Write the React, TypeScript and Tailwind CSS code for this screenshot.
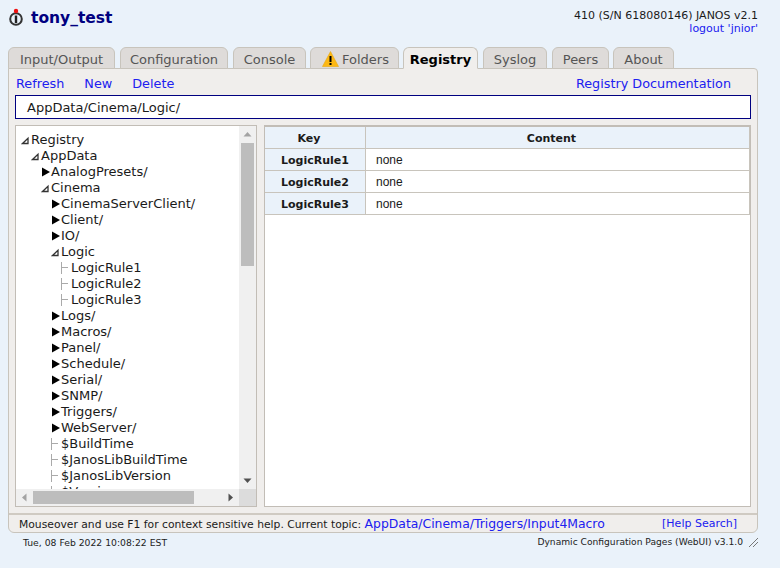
const tabs = [
  { name: 'Input/Output', w: 'w-[107px] mr-[5px]' },
  { name: 'Configuration', w: 'w-[108px] mr-[5px]' },
  { name: 'Console', w: 'w-[73px] mr-[4px]' },
  { name: 'Folders', w: 'w-[89px] mr-[4px]', warn: true },
  { name: 'Registry', w: 'w-[75px] mr-[5px]', active: true },
  { name: 'Syslog', w: 'w-[64px] mr-[5px]' },
  { name: 'Peers', w: 'w-[57px] mr-[4px]' },
  { name: 'About', w: 'w-[61px]' },
]

type Node = { label: string; depth: number; kind: 'open' | 'closed' | 'leaf' }

const tree: Node[] = [
  { label: 'Registry', depth: 0, kind: 'open' },
  { label: 'AppData', depth: 1, kind: 'open' },
  { label: 'AnalogPresets/', depth: 2, kind: 'closed' },
  { label: 'Cinema', depth: 2, kind: 'open' },
  { label: 'CinemaServerClient/', depth: 3, kind: 'closed' },
  { label: 'Client/', depth: 3, kind: 'closed' },
  { label: 'IO/', depth: 3, kind: 'closed' },
  { label: 'Logic', depth: 3, kind: 'open' },
  { label: 'LogicRule1', depth: 4, kind: 'leaf' },
  { label: 'LogicRule2', depth: 4, kind: 'leaf' },
  { label: 'LogicRule3', depth: 4, kind: 'leaf' },
  { label: 'Logs/', depth: 3, kind: 'closed' },
  { label: 'Macros/', depth: 3, kind: 'closed' },
  { label: 'Panel/', depth: 3, kind: 'closed' },
  { label: 'Schedule/', depth: 3, kind: 'closed' },
  { label: 'Serial/', depth: 3, kind: 'closed' },
  { label: 'SNMP/', depth: 3, kind: 'closed' },
  { label: 'Triggers/', depth: 3, kind: 'closed' },
  { label: 'WebServer/', depth: 3, kind: 'closed' },
  { label: '$BuildTime', depth: 3, kind: 'leaf' },
  { label: '$JanosLibBuildTime', depth: 3, kind: 'leaf' },
  { label: '$JanosLibVersion', depth: 3, kind: 'leaf' },
  { label: '$Version', depth: 3, kind: 'leaf' },
]

const depthPad = ['pl-[5px]', 'pl-[15px]', 'pl-[25px]', 'pl-[35px]', 'pl-[45px]']

function TreeIcon({ kind }: { kind: Node['kind'] }) {
  return (
    <svg width="10" height="16" viewBox="0 0 10 16" className="shrink-0">
      {kind === 'closed' && <path d="M1 3.5 L9 8 L1 12.5 Z" fill="#000" />}
      {kind === 'open' && <path d="M7 6.2 V11.5 H1.5 Z" fill="#fff" stroke="#333" strokeWidth="1.3" />}
      {kind === 'leaf' && <path d="M0.5 2 V14 M0.5 7.5 H7" fill="none" stroke="#aaa" strokeWidth="1" />}
    </svg>
  )
}

function Logo() {
  return (
    <svg width="16" height="22" viewBox="0 0 16 22">
      <circle cx="8" cy="11" r="5.8" fill="none" stroke="#333" strokeWidth="2" />
      <rect x="6.8" y="7.5" width="2.4" height="7.5" fill="#222" />
      <circle cx="8" cy="3" r="2.2" fill="#f01010" />
    </svg>
  )
}

function Warn() {
  return (
    <svg width="17" height="16" viewBox="0 0 17 16" className="shrink-0 mb-[3px]">
      <path d="M8.5 0.5 L16.5 15.5 H0.5 Z" fill="#fdb813" stroke="#e8a810" strokeWidth="0.6" />
      <rect x="7.5" y="5" width="2" height="6" fill="#000" />
      <rect x="7.5" y="12" width="2" height="2" fill="#000" />
    </svg>
  )
}

function VScroll() {
  return (
    <div className="w-[17px] shrink-0 bg-[#f0f0f0] flex flex-col items-center">
      <svg width="17" height="17" viewBox="0 0 17 17"><path d="M4.5 10.5 L8.5 6 L12.5 10.5 Z" fill="#a3a3a3" /></svg>
      <div className="w-[13px] h-[123px] bg-[#bdbdbd]" />
      <div className="flex-1" />
      <svg width="17" height="17" viewBox="0 0 17 17"><path d="M4.5 6.5 L8.5 11 L12.5 6.5 Z" fill="#505050" /></svg>
    </div>
  )
}

function HScroll() {
  return (
    <div className="h-[17px] shrink-0 bg-[#f0f0f0] flex items-center">
      <svg width="17" height="17" viewBox="0 0 17 17" className="shrink-0"><path d="M10.5 4.5 L6 8.5 L10.5 12.5 Z" fill="#a3a3a3" /></svg>
      <div className="w-[161px] h-[13px] bg-[#bdbdbd]" />
      <div className="flex-1" />
      <svg width="17" height="17" viewBox="0 0 17 17" className="shrink-0"><path d="M6.5 4.5 L11 8.5 L6.5 12.5 Z" fill="#505050" /></svg>
      <div className="w-[17px] h-[17px] bg-[#dcdcdc]" />
    </div>
  )
}

const rules = ['LogicRule1', 'LogicRule2', 'LogicRule3']

export default function App() {
  return (
    <div className="w-[780px] h-[568px] overflow-hidden bg-[#eaf2fa] font-['DejaVu_Sans',sans-serif] text-[13px] text-[#1a1a1a]">
      <div className="h-[47px] pl-[8px] pr-[22px] flex justify-between">
        <div className="flex items-center gap-[7px] h-[36px] pt-[1px]">
          <Logo />
          <span className="text-[15.5px] font-bold text-[#000080]">tony_test</span>
        </div>
        <div className="pt-[9px] text-right text-[11px] leading-[13px]">
          <div>410 (S/N 618080146) JANOS v2.1</div>
          <a className="text-[#2020f0]">logout 'jnior'</a>
        </div>
      </div>

      <div className="h-[21px] pl-[8px] flex">
        {tabs.map(t => (
          <div
            key={t.name}
            className={`${t.w} h-[22px] pt-[4px] relative flex items-center justify-center rounded-t-[6px] border border-[#c8c4bc] ${
              t.warn ? 'pl-[2px] gap-[3px]' : ''
            } ${t.active ? 'bg-[#f0eeec] border-b-[#f0eeec] font-bold text-black z-10' : 'bg-[#dedbd9] text-[#555]'}`}
          >
            {t.warn && <Warn />}
            {t.name}
          </div>
        ))}
      </div>

      <div className="ml-[8px] w-[750px] h-[465px] bg-[#f0eeec] border border-[#c8c4bc] rounded-tr-[4px] rounded-b-[6px] flex flex-col">
        <div className="h-[26px] shrink-0 pt-[4px] pl-[7px] pr-[26px] flex items-center justify-between text-[12.8px] text-[#2020f0]">
          <div className="flex gap-[20px]">
            <a>Refresh</a>
            <a>New</a>
            <a>Delete</a>
          </div>
          <a>Registry Documentation</a>
        </div>

        <div className="mx-[6px] h-[24px] shrink-0 pt-[2px] bg-white border border-[#000080] pl-[11px] flex items-center">
          AppData/Cinema/Logic/
        </div>

        <div className="mx-[6px] mt-[6px] h-[382px] shrink-0 flex gap-[7px]">
          <div className="w-[242px] border border-[#c2bdb6] flex flex-col bg-white">
            <div className="flex-1 min-h-0 flex">
              <div className="flex-1 overflow-hidden pt-[6px]">
                {tree.map(n => (
                  <div key={n.label} className={`flex h-[16px] leading-[16px] whitespace-nowrap ${depthPad[n.depth]}`}>
                    <TreeIcon kind={n.kind} />
                    <span>{n.label}</span>
                  </div>
                ))}
              </div>
              <VScroll />
            </div>
            <HScroll />
          </div>

          <div className="flex-1 border border-[#c2bdb6] bg-white">
            <div className="border-t border-[#c2bdb6]">
              <div className="flex h-[22px] bg-[#eaf2fa] font-bold text-[11px] border-b border-[#c8c4bc]">
                <div className="w-[101px] pt-[4px] pr-[12px] border-r border-[#c8c4bc] flex items-center justify-center">Key</div>
                <div className="flex-1 pt-[4px] pr-[12px] border-r border-[#c8c4bc] flex items-center justify-center">Content</div>
              </div>
              {rules.map(r => (
                <div key={r} className="flex h-[22px] border-b border-[#c8c4bc] text-[11px]">
                  <div className="w-[101px] pt-[3px] bg-[#eaf2fa] border-r border-[#c8c4bc] font-bold flex items-center justify-center">{r}</div>
                  <div className="flex-1 pt-[1px] border-r border-[#c8c4bc] pl-[10px] flex items-center font-['Liberation_Sans',sans-serif] text-[12px]">none</div>
                </div>
              ))}
            </div>
          </div>
        </div>

        <div className="mt-[6px] h-[19px] shrink-0 pt-[1px] border-t-2 border-[#cfcac2] pl-[10px] pr-[20px] flex items-center justify-between text-[11px] leading-[14px]">
          <div className="text-[10.75px]">
            Mouseover and use F1 for context sensitive help. Current topic: <a className="text-[12.4px] text-[#2020f0]">AppData/Cinema/Triggers/Input4Macro</a>
          </div>
          <a className="text-[#2020f0]">[Help Search]</a>
        </div>
      </div>

      <div className="pl-[23px] pr-[22px] pt-[3px] flex justify-between text-[9.25px] leading-[13px] text-[#222]">
        <span>Tue, 08 Feb 2022 10:08:22 EST</span>
        <div className="flex items-center gap-[6px]">
          <span className="text-[9.15px]">Dynamic Configuration Pages (WebUI) v3.1.0</span>
          <svg width="9" height="9" viewBox="0 0 9 9"><path d="M0 9 L9 0 M4 9 L9 4" stroke="#777" strokeWidth="1" /></svg>
        </div>
      </div>
    </div>
  )
}
